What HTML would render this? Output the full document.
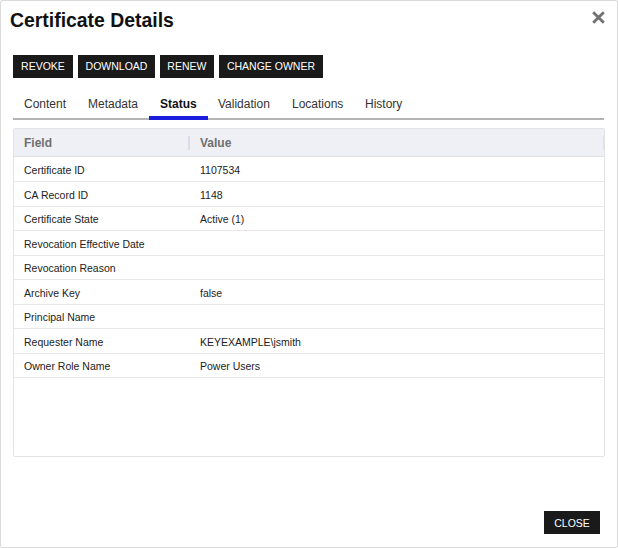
<!DOCTYPE html>
<html><head><meta charset="utf-8">
<style>
html,body{margin:0;padding:0;width:618px;height:548px;overflow:hidden;background:#fff;}
body{font-family:"Liberation Sans",sans-serif;position:relative;}
.dlg{position:absolute;left:0;top:0;width:618px;height:548px;box-sizing:border-box;border:1px solid #dadada;border-radius:2px;background:#fff;}
.title{position:absolute;left:10px;top:8px;font-size:19.4px;font-weight:bold;color:#111;line-height:24px;white-space:nowrap;}
.x{position:absolute;left:591px;top:10px;width:15px;height:15px;}
.btn{position:absolute;top:55px;height:22.5px;background:#1a1a1a;color:#fff;font-size:10.5px;line-height:22.5px;text-align:center;white-space:nowrap;}
.tabs{position:absolute;left:13px;top:90px;width:591px;height:29px;}
.tabline{position:absolute;left:13px;top:118px;width:591px;height:2px;background:#b4b4b4;}
.tab{position:absolute;top:96px;font-size:12px;color:#333;line-height:16px;white-space:nowrap;}
.tab.active{font-weight:bold;color:#111;}
.ul{position:absolute;left:149px;top:116px;width:58.6px;height:3.7px;background:#1c1cdc;}
.tbl{position:absolute;left:13px;top:128px;width:592px;height:329px;box-sizing:border-box;border:1px solid #e2e3e7;border-radius:2px;}
.hdr{position:absolute;left:14px;top:129px;width:590px;height:27px;background:#eef0f5;}
.rl{position:absolute;left:14px;width:590px;height:1px;background:#e8e8ea;}
.hf{position:absolute;top:135px;font-size:12px;font-weight:bold;color:#6f6f6f;line-height:16px;white-space:nowrap;}
.sep{position:absolute;left:188px;top:136px;width:1.5px;height:14px;background:#dcdde1;}
.cell{position:absolute;font-size:10.5px;color:#222;line-height:14px;white-space:nowrap;}
.close{position:absolute;left:543.6px;top:511.4px;width:56.9px;height:22.5px;background:#1a1a1a;color:#fff;font-size:10.5px;line-height:24.2px;text-align:center;}
</style></head><body>
<div class="dlg"></div>
<div class="title">Certificate Details</div>
<svg class="x" viewBox="0 0 15 15"><path d="M2.2 2.2 L12.8 12.8 M12.8 2.2 L2.2 12.8" stroke="#717171" stroke-width="2.8" stroke-linecap="butt"/></svg>
<div class="btn" style="left:13px;width:60px;">REVOKE</div>
<div class="btn" style="left:78px;width:77px;">DOWNLOAD</div>
<div class="btn" style="left:159.5px;width:54.7px;">RENEW</div>
<div class="btn" style="left:219px;width:104px;">CHANGE OWNER</div>
<div class="tabline"></div>
<div class="tab" style="left:24px;">Content</div>
<div class="tab" style="left:88px;">Metadata</div>
<div class="tab active" style="left:160px;">Status</div>
<div class="tab" style="left:218px;">Validation</div>
<div class="tab" style="left:292px;">Locations</div>
<div class="tab" style="left:365px;">History</div>
<div class="ul"></div>
<div class="tbl"></div>
<div class="hdr"></div><div class="rl" style="top:156px;background:#dfe1e6"></div>
<div class="hf" style="left:24px">Field</div><div class="sep"></div><div class="sep" style="left:602.6px;width:1.2px;background:#e0e1e6"></div><div class="hf" style="left:200px">Value</div>
<div class="rl" style="top:181px"></div><div class="cell" style="left:24px;top:162.5px">Certificate ID</div><div class="cell" style="left:200px;top:162.5px">1107534</div>
<div class="rl" style="top:206px"></div><div class="cell" style="left:24px;top:187.5px">CA Record ID</div><div class="cell" style="left:200px;top:187.5px">1148</div>
<div class="rl" style="top:230px"></div><div class="cell" style="left:24px;top:212.0px">Certificate State</div><div class="cell" style="left:200px;top:212.0px">Active (1)</div>
<div class="rl" style="top:255px"></div><div class="cell" style="left:24px;top:236.5px">Revocation Effective Date</div>
<div class="rl" style="top:279px"></div><div class="cell" style="left:24px;top:261.0px">Revocation Reason</div>
<div class="rl" style="top:304px"></div><div class="cell" style="left:24px;top:285.5px">Archive Key</div><div class="cell" style="left:200px;top:285.5px">false</div>
<div class="rl" style="top:328px"></div><div class="cell" style="left:24px;top:310.0px">Principal Name</div>
<div class="rl" style="top:353px"></div><div class="cell" style="left:24px;top:334.5px">Requester Name</div><div class="cell" style="left:200px;top:334.5px">KEYEXAMPLE\jsmith</div>
<div class="rl" style="top:377px"></div><div class="cell" style="left:24px;top:359.0px">Owner Role Name</div><div class="cell" style="left:200px;top:359.0px">Power Users</div>
<div class="close">CLOSE</div>
</body></html>
